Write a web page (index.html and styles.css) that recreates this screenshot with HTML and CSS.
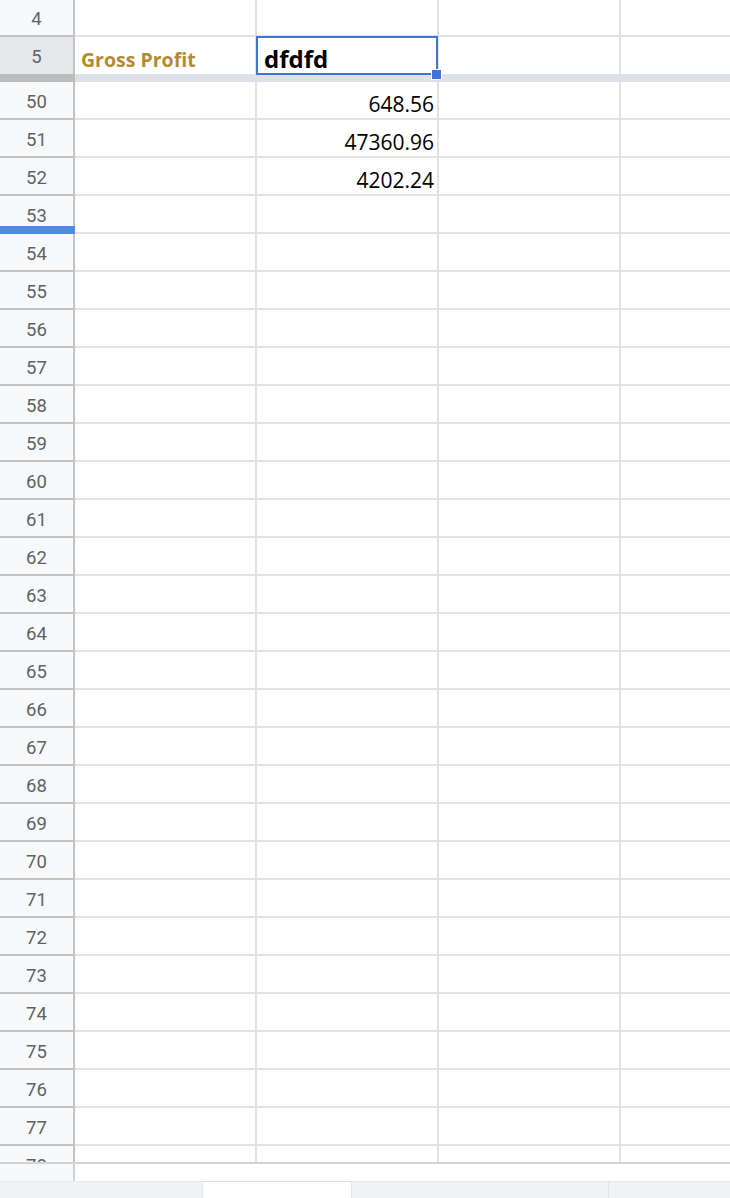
FILE: index.html
```html
<!DOCTYPE html>
<html lang="en">
<head>
<meta charset="UTF-8">
<meta name="viewport" content="width=device-width, initial-scale=1.0">
<title>Sheet</title>
<link rel="stylesheet" href="styles.css">
</head>
<body>
<div class="sheet">
    <div class="row row-top">
        <div class="hd">4</div>
        <div class="cell"></div><div class="cell"></div><div class="cell"></div><div class="cell"></div>
    </div>
    <div class="row row-frozen">
        <div class="hd hd-active">5</div>
        <div class="cell txt-label">Gross Profit</div>
        <div class="cell txt-bold">dfdfd
            <div class="selection"><span class="handle"></span></div>
        </div>
        <div class="cell"></div><div class="cell"></div>
    </div>
    <div class="freeze">
        <div class="freeze-hd"></div>
        <div class="freeze-grid"></div>
    </div>
    <div id="rows"></div>
</div>
<div class="hscroll">
    <div class="hscroll-hd"></div>
    <div class="hscroll-grid"></div>
</div>
<div class="tabbar">
    <div class="tab-gap"></div>
    <div class="tab"></div>
    <div class="tab-rest"></div>
    <div class="tab-end"></div>
</div>
<script>
// rows after the freeze line
var values = { 50: '648.56', 51: '47360.96', 52: '4202.24' };
var html = '';
for (var r = 50; r <= 78; r++) {
    var v = values[r] || '';
    html += '<div class="row">' +
            '<div class="hd">' + r + (r === 53 ? '<span class="drag"></span>' : '') + '</div>' +
            '<div class="cell"></div>' +
            '<div class="cell txt-num">' + v + '</div>' +
            '<div class="cell"></div><div class="cell"></div>' +
            '</div>';
}
document.getElementById('rows').innerHTML = html;
</script>
</body>
</html>
```

FILE: styles.css
```css
/* grid of the sheet */
* {
    box-sizing: border-box;
}
body {
    margin: 0;
    width: 730px;
    height: 1198px;
    overflow: hidden;
    background-color: #ffffff;
    font-family: "Open Sans", Arial, sans-serif;
}
.sheet {
    height: 1162px;
    overflow: hidden;
}
.row {
    display: grid;
    grid-template-columns: 75px 182px 182px 182px 112px;
    height: 38px;
}
.row-top {
    height: 37px;
}
.row-frozen {
    height: 37px;
}
.hd {
    position: relative;
    display: flex;
    align-items: center;
    justify-content: center;
    padding-top: 3px;
    background-color: #f8f9fa;
    border-right: 2px solid #c4c4c4;
    border-bottom: 2px solid #c4c4c4;
    font-family: Roboto, Arial, sans-serif;
    font-size: 18.5px;
    color: #5f6368;
}
.cell {
    position: relative;
    display: flex;
    align-items: flex-end;
    padding: 0 6px 1px 6px;
    border-right: 2px solid #e2e2e2;
    border-bottom: 2px solid #e2e2e2;
    font-size: 21px;
    line-height: 26px;
    color: #000000;
    white-space: nowrap;
}
.row-frozen .hd,
.row-frozen .cell {
    border-bottom: none;
}
.hd-active {
    background-color: #e6e8eb;
}
.txt-label {
    font-size: 19.5px;
    font-weight: bold;
    color: #b58b32;
}
.txt-bold {
    padding-left: 7px;
    padding-bottom: 2px;
    font-size: 24px;
    font-weight: bold;
}
.txt-num {
    justify-content: flex-end;
    padding-right: 3px;
}
.selection {
    position: absolute;
    left: -1px;
    top: -1px;
    width: 182px;
    height: 39px;
    border: 2px solid #3f74d4;
}
.handle {
    position: absolute;
    left: 173px;
    top: 31px;
    width: 11px;
    height: 11px;
    background-color: #3f74d4;
    border: 1px solid #ffffff;
}
.drag {
    position: absolute;
    left: 0;
    right: -2px;
    bottom: -2px;
    height: 8px;
    background-color: #5189ea;
}
.freeze {
    display: flex;
    height: 8px;
}
.freeze-hd {
    width: 75px;
    background-color: #bcbcbc;
}
.freeze-grid {
    flex: 1;
    background-color: #dee2e8;
}
.hscroll {
    display: flex;
    height: 19px;
    border-top: 2px solid #d4d4d4;
}
.hscroll-hd {
    width: 75px;
    background-color: #f8f9fa;
    border-right: 2px solid #d0d0d0;
}
.hscroll-grid {
    flex: 1;
}
.tabbar {
    display: flex;
    height: 17px;
    background-color: #f1f2f4;
    border-top: 1px solid #e6e8eb;
}
.tab-gap {
    width: 203px;
}
.tab {
    width: 148px;
    background-color: #ffffff;
    box-shadow: 0 0 2px rgba(0, 0, 0, 0.15);
}
.tab-rest {
    width: 258px;
    border-right: 1px solid #e0e2e6;
}
.tab-end {
    flex: 1;
}
```
